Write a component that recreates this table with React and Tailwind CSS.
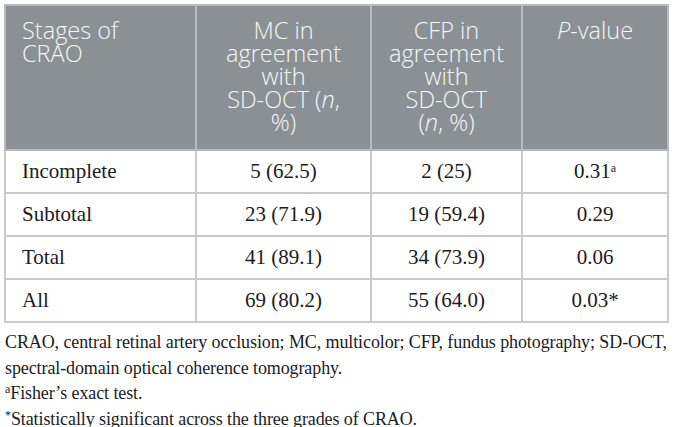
export default function App() {
  const rows = [
    ["Incomplete", "5 (62.5)", "2 (25)", <>0.31<sup className="text-[12px]">a</sup></>],
    ["Subtotal", "23 (71.9)", "19 (59.4)", "0.29"],
    ["Total", "41 (89.1)", "34 (73.9)", "0.06"],
    ["All", "69 (80.2)", "55 (64.0)", "0.03*"],
  ];
  const hsans = { fontFamily: '"Open Sans", "Noto Sans", sans-serif' };
  const serif = { fontFamily: '"Liberation Serif", serif' };
  const hb = "border-2 border-[#b8bbbd] font-[350] align-top pt-[13px]";
  const bb = "border-2 border-[#c8cacb]";
  return (
    <div className="w-[674px] h-[427px] bg-white pt-[4px] pl-[4px] overflow-hidden">
      <table className="border-collapse w-[663px] table-fixed border-2 border-[#c8cacb]" style={serif}>
        <colgroup>
          <col className="w-[191px]" />
          <col className="w-[175px]" />
          <col className="w-[151px]" />
          <col className="w-[146px]" />
        </colgroup>
        <thead>
          <tr className="bg-[#8b9094] text-[#f6f7f7] h-[145px] text-[23.5px] leading-[23px]" style={hsans}>
            <th className={`${hb} text-left pl-[16px]`}>Stages of<br />CRAO</th>
            <th className={`${hb} text-center`}>MC in<br />agreement<br />with<br />SD-OCT (<i>n</i>,<br />%)</th>
            <th className={`${hb} text-center`}>CFP in<br />agreement<br />with<br />SD-OCT<br />(<i>n</i>, %)</th>
            <th className={`${hb} text-center`}><i>P</i>-value</th>
          </tr>
        </thead>
        <tbody className="text-[21px] text-[#1c1c1c]">
          {rows.map((r, i) => (
            <tr key={i} className="h-[43px]">
              <td className={`${bb} pl-[16px] pt-[1px]`}>{r[0]}</td>
              <td className={`${bb} text-center pt-[1px]`}>{r[1]}</td>
              <td className={`${bb} text-center pt-[1px]`}>{r[2]}</td>
              <td className={`${bb} text-center pt-[1px]`}>{r[3]}</td>
            </tr>
          ))}
        </tbody>
      </table>
      <div className="text-[18px] leading-[25.5px] text-[#1c1c1c] mt-[7px] pl-[1px] tracking-[-0.1px]" style={serif}>
        <p className="whitespace-nowrap">CRAO, central retinal artery occlusion; MC, multicolor; CFP, fundus photography; SD-OCT,</p>
        <p>spectral-domain optical coherence tomography.</p>
        <p><sup className="text-[12px]">a</sup>Fisher’s exact test.</p>
        <p><sup className="text-[12px]">*</sup>Statistically significant across the three grades of CRAO.</p>
      </div>
    </div>
  );
}
